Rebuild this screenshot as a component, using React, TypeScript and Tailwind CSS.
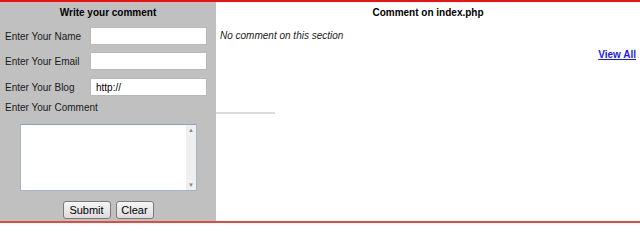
import React from 'react';

const fields = [
  { label: 'Enter Your Name', value: '', gap: 'mt-[7px]' },
  { label: 'Enter Your Email', value: '', gap: 'mt-[7px]' },
  { label: 'Enter Your Blog', value: 'http://', gap: 'mt-[8px]' },
];

const App = () => {
  return (
    <div className="h-[223px] w-[640px] box-border border-t-2 border-b-2 border-t-[#f01010] border-b-[#e84a3a] flex text-[10px] text-[#1a1a1a] font-['Liberation_Sans',Arial,sans-serif] bg-white">
      {/* Comment form */}
      <div className="w-[216px] bg-[#c0c0c0] flex flex-col">
        <div className="mt-[4px] h-[14px] leading-[14px] text-center font-bold text-black">Write your comment</div>
        {fields.map((f) => (
          <div key={f.label} className={`${f.gap} h-[18px] flex items-center`}>
            <span className="w-[90px] pl-[5px]">{f.label}</span>
            <div className="w-[117px] h-[18px] bg-white border border-[#b8b8b8] flex items-center pl-[5px] text-black">
              {f.value}
            </div>
          </div>
        ))}
        <div className="mt-[5px] h-[14px] leading-[14px] pl-[5px]">Enter Your Comment</div>
        <div className="mt-[9px] ml-[20px] w-[177px] h-[67px] bg-white border border-[#a9b4c2] border-t-[#8ea2bb] flex justify-end">
          <div className="w-[10px] h-full bg-[#f0f0f0] flex flex-col justify-between items-center py-[2px] text-[6px] leading-[6px] text-[#8a8a8a]">
            <span>▲</span>
            <span>▼</span>
          </div>
        </div>
        <div className="mt-[10px] h-[18px] flex justify-center gap-[5px] text-[11px] text-black">
          <button className="w-[48px] h-[18px] rounded-[3px] border border-[#7a7a7a] bg-gradient-to-b from-[#f6f6f6] to-[#dcdcdc] leading-none">
            Submit
          </button>
          <button className="w-[38px] h-[18px] rounded-[3px] border border-[#7a7a7a] bg-gradient-to-b from-[#f6f6f6] to-[#dcdcdc] leading-none">
            Clear
          </button>
        </div>
      </div>

      {/* Comment list */}
      <div className="flex-1 flex flex-col">
        <div className="mt-[4px] h-[14px] leading-[14px] text-center font-bold text-black">Comment on index.php</div>
        <div className="mt-[9px] h-[14px] leading-[14px] pl-[4px] italic">No comment on this section</div>
        <div className="mt-[5px] h-[14px] leading-[14px] pr-[4px] text-right">
          <a href="#" className="font-bold text-[#1a1aee] underline">View All</a>
        </div>
        <div className="mt-[50px] h-[2px] w-[59px] bg-[#dcdcdc]" />
      </div>
    </div>
  );
};

export default App;
